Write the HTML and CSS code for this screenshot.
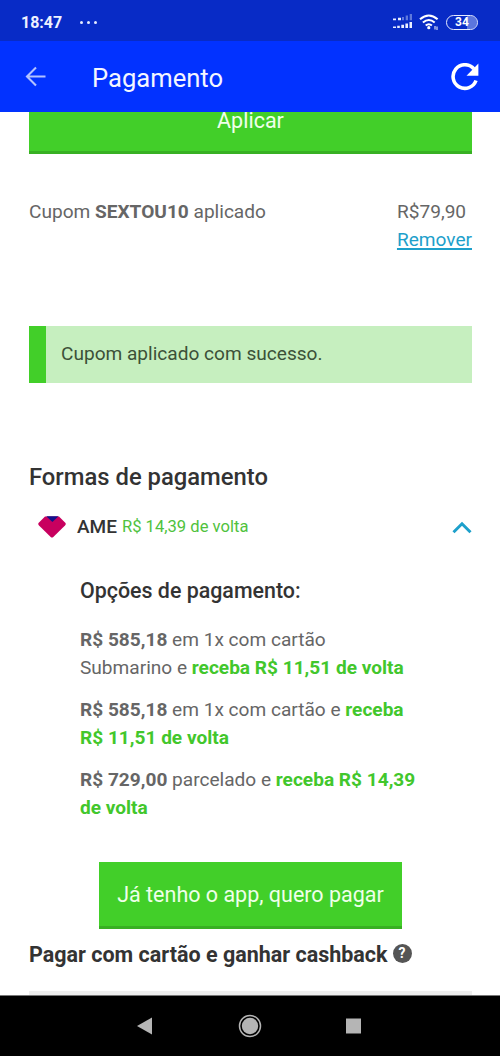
FILE: index.html
```html
<!DOCTYPE html>
<html lang="pt-BR">
<head>
<meta charset="utf-8">
<title>Pagamento</title>
<link rel="stylesheet" href="styles.css">
</head>
<body>
<div class="screen">
  <header class="status">
    <span class="time">18:47</span>
    <span class="dots"><i></i><i></i><i></i></span>
    <svg class="signal" width="20" height="16" viewBox="0 0 20 16">
      <g fill="#e9eeff"><path d="M0 4.500h3v1.800H0zM5 3.800h3v2.500H5zM0 12.500h3V14H0zM4.200 11.700h2.600V14H4.200zM8.300 10.700H11V14H8.300zM12.400 9.400H15V14h-2.600zM16.500 8H19v6h-2.500z"/></g>
      <path fill="#5f79dc" d="M9 3h2v3.300H9zM12.700 1.500H15v4.800h-2.300zM16.700 0H19v6.300h-2.300z"/>
    </svg>
    <svg class="wifi" width="21" height="17" viewBox="0 0 21 17">
      <g fill="none" stroke="#fff" stroke-width="2.100"><path d="M1 5.300Q9.800-2.300 18.600 5.300M3.900 8.500Q9.800 3.500 15.700 8.500M6.700 11.500Q9.800 9 12.900 11.500"/></g>
      <circle cx="9.800" cy="13.700" r="1.600" fill="#fff"/>
      <path d="M16 12v3.500M18 12.500v3.500" stroke="#fff" stroke-width="1"/>
    </svg>
    <span class="battery">34</span>
  </header>
  <nav class="appbar">
    <svg class="back" width="22" height="22" viewBox="0 0 22 22"><path d="M20.500 10.500H2M11 1.500 2 10.500l9 9" fill="none" stroke="#b3c2ff" stroke-width="2.100"/></svg>
    <h1 class="title">Pagamento</h1>
    <svg class="reload" width="28" height="28" viewBox="0 0 28 28"><path d="M22.800 5.800A11.800 11.800 0 1 0 25 17.500" fill="none" stroke="#fff" stroke-width="3.600"/><path d="M27.400.5v12.300H15.500z" fill="#fff"/></svg>
  </nav>
  <main class="content">
    <div class="apply"><span>Aplicar</span></div>
    <div class="coupon">
      <p>Cupom <b>SEXTOU10</b> aplicado</p>
      <div class="discount"><span>R$79,90</span><a href="#">Remover</a></div>
    </div>
    <div class="alert">Cupom aplicado com sucesso.</div>
    <h2 class="heading">Formas de pagamento</h2>
    <div class="method">
      <svg width="28" height="22" viewBox="0 0 28 22"><path d="M7 .6h14l6.500 6.500q.7 1.300-.5 2.500L15.300 20.900q-1.300 1-2.600 0L1 9.600q-1.200-1.200-.5-2.500z" fill="#c8005f"/><path d="M8.300.3h12.200L14.400 6z" fill="#12128c"/></svg>
      <span class="brand">AME</span><span class="cashback">R$ 14,39 de volta</span>
      <svg class="chevron" width="20" height="13" viewBox="0 0 20 13"><path d="m1.500 11.300 8.500-8.500 8.500 8.500" fill="none" stroke="#1da0cb" stroke-width="3"/></svg>
    </div>
    <section class="options">
      <h3 class="subheading">Opções de pagamento:</h3>
      <p><b>R$ 585,18</b> em 1x com cartão<br>Submarino e <b class="green">receba R$ 11,51 de volta</b></p>
      <p><b>R$ 585,18</b> em 1x com cartão e <b class="green">receba<br>R$ 11,51 de volta</b></p>
      <p><b>R$ 729,00</b> parcelado e <b class="green">receba R$ 14,39<br>de volta</b></p>
    </section>
    <div class="pay">Já tenho o app, quero pagar</div>
    <h2 class="card-title">Pagar com cartão e ganhar cashback<span class="help">?</span></h2>
    <div class="divider"></div>
  </main>
  <footer class="navbar">
    <svg width="500" height="60" viewBox="0 0 500 60"><g fill="#b5b5b5"><path d="M137 30l15-8.500v17z"/><circle cx="250" cy="30" r="8.200"/><path d="M346 22.500h15v15h-15z"/></g><circle cx="250" cy="30" r="10.500" fill="none" stroke="#b5b5b5" stroke-width="1.500"/></svg>
  </footer>
</div>
</body>
</html>
```
FILE: styles.css
```css
* { box-sizing: border-box; }
body { margin: 0; background: #fff; font-family: Roboto, "Liberation Sans", sans-serif; }
h1, h2, h3, p { margin: 0; }
b { font-weight: 700; }
.screen { width: 500px; height: 1056px; display: flex; flex-direction: column; overflow: hidden; white-space: nowrap; }
.status { height: 41px; flex: none; background: #082bc6; display: flex; align-items: center; padding: 3px 22px 0 21px; color: #fff; }
.time { font-size: 16px; font-weight: 700; width: 41px; color: #edf1ff; }
.dots { display: flex; gap: 4px; margin-left: 18px; }
.dots i { width: 3px; height: 3px; border-radius: 50%; background: #e6ebff; }
.signal { margin-left: auto; }
.wifi { margin: 0 6px 0 6px; }
.battery { width: 32px; height: 15px; border: 1.500px solid #e6ebff; border-radius: 8px; font-size: 12px; font-weight: 700; line-height: 13px; text-align: center; background: linear-gradient(90deg, transparent 65%, #5c76de 65%); background-clip: padding-box; }
.appbar { height: 71px; flex: none; background: #0232ff; display: flex; align-items: center; padding: 0 21px 0 25px; color: #f4f6ff; }
.title { font-size: 25.600px; font-weight: 400; margin-left: 45px; padding-top: 2px; }
.reload { margin-left: auto; }
.content { flex: 1; min-height: 0; overflow: hidden; padding: 0 28px 0 29px; color: #666; font-size: 19.080px; line-height: 28px; }
.apply { height: 42px; background: #42cf29; border-bottom: 3px solid #38b023; color: #efffea; font-size: 21.500px; text-align: center; line-height: 18px; }
.coupon { display: flex; justify-content: space-between; margin-top: 44px; }
.discount { display: flex; flex-direction: column; }
.discount a { color: #1da0cb; text-decoration-thickness: 1.500px; text-underline-offset: 2px; }
.alert { margin-top: 72px; height: 57px; border-left: 17px solid #42cf29; background: #c6efbf; padding-left: 15px; line-height: 55px; color: #3c5138; }
.heading { margin-top: 77px; font-size: 23.800px; line-height: 34px; font-weight: 500; color: #333; }
.method { display: flex; align-items: center; height: 34px; margin-top: 16px; padding-left: 9px; }
.brand { font-size: 19px; font-weight: 500; color: #333; margin-left: 11px; }
.cashback { font-size: 16.600px; color: #4fc23d; margin-left: 5px; }
.chevron { margin-left: auto; }
.options { padding-left: 51px; margin-top: 31px; }
.subheading { font-size: 21.400px; line-height: 32px; font-weight: 500; color: #333; margin-bottom: 19px; }
.options p { margin-bottom: 14px; }
.green { color: #42c72c; }
.pay { width: 303px; height: 67px; margin: 40px 0 0 70px; background: #42cf29; border-bottom: 3px solid #38b023; color: #efffea; font-size: 21.500px; text-align: center; line-height: 65px; }
.card-title { display: flex; align-items: center; margin-top: 10px; height: 32px; font-size: 21.500px; font-weight: 700; color: #333; }
.help { width: 19px; height: 19px; margin: -3px 0 0 5px; border-radius: 50%; background: #555; color: #fff; font-size: 14px; line-height: 19px; text-align: center; }
.divider { height: 5px; margin-top: 20px; background: #eee; }
.navbar { height: 61px; flex: none; background: #000; border-top: 1px solid #777; }
.navbar svg { display: block; }
```
